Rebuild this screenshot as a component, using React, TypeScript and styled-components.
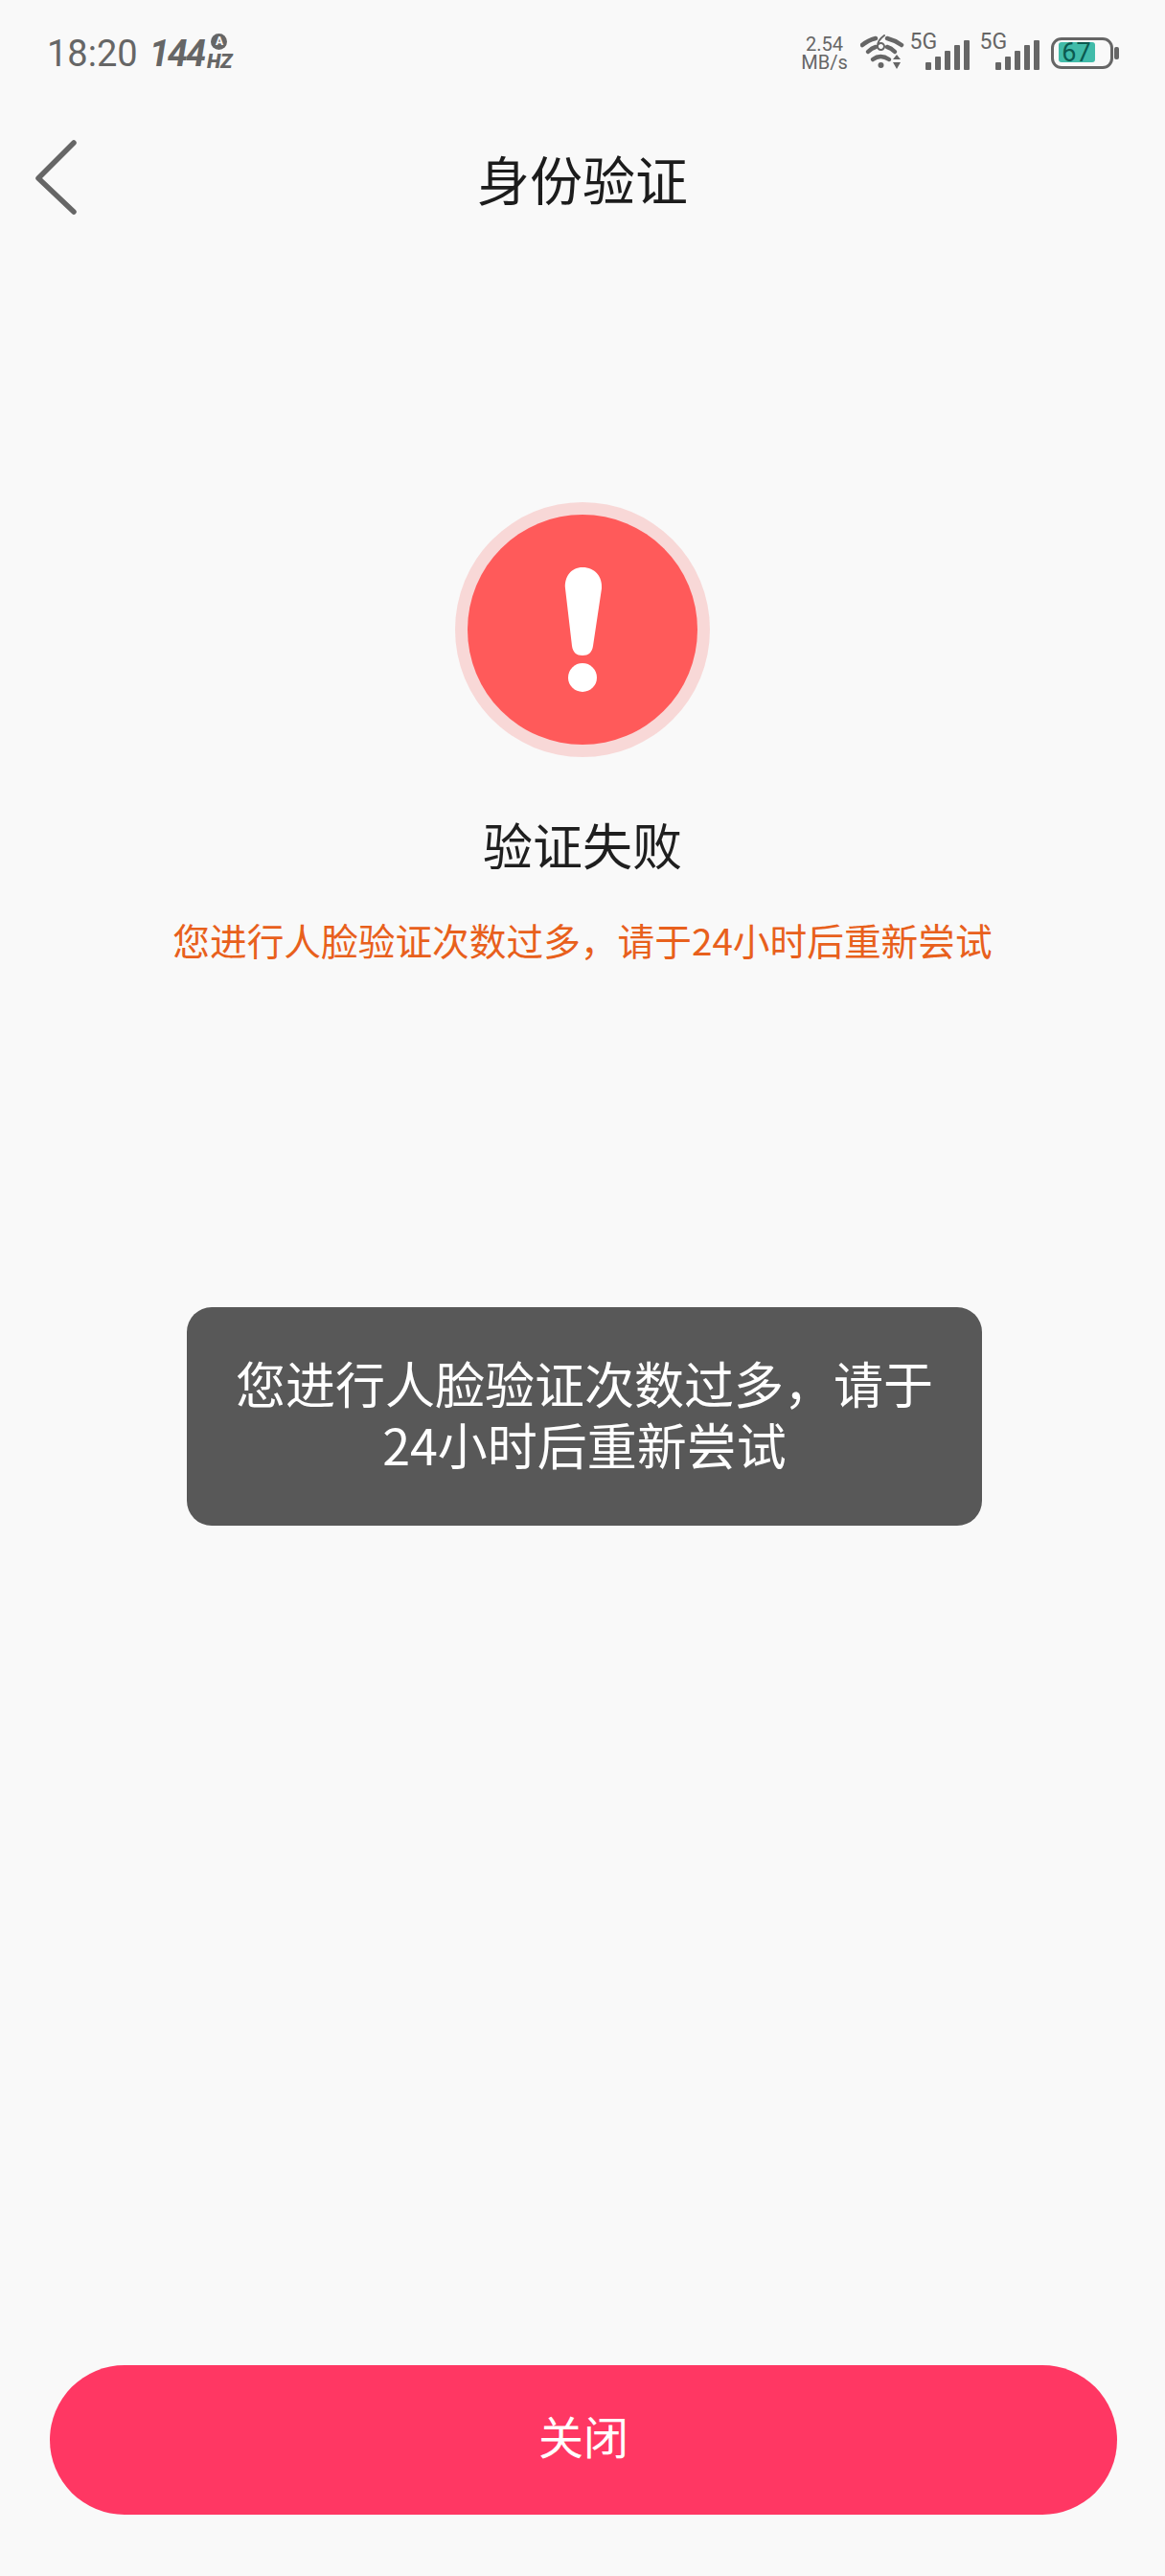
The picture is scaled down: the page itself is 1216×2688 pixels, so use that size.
import React from "react";
import styled, { createGlobalStyle } from "styled-components";

const GlobalStyle = createGlobalStyle`
    html, body {
        margin: 0;
        padding: 0;
        background: #f9f9f9;
    }
    * {
        box-sizing: border-box;
    }
`;

const cjk = `"Noto Sans CJK SC", "Noto Sans", sans-serif`;

const Page = styled.div`
    position: relative;
    display: flex;
    flex-direction: column;
    align-items: stretch;
    width: 1216px;
    height: 2688px;
    background: #f9f9f9;
    font-family: ${cjk};
    overflow: hidden;
`;

const StatusBar = styled.div`
    display: flex;
    justify-content: space-between;
    align-items: flex-start;
    height: 112px;
    padding: 36px 48px 0 49px;
    color: #666;
    font-family: Roboto, sans-serif;
`;

const StatusLeft = styled.div`
    display: flex;
    align-items: flex-start;
    gap: 12px;
`;

const Time = styled.span`
    font-size: 38px;
    line-height: 40px;
`;

const Rate = styled.div`
    display: flex;
    align-items: flex-end;
    height: 40px;
`;

const RateValue = styled.span`
    font-size: 38px;
    font-weight: 700;
    font-style: italic;
    line-height: 40px;
    letter-spacing: -2px;
`;

const RateUnit = styled.div`
    display: flex;
    flex-direction: column;
    align-items: center;
    margin: 0 0 3px 3px;
`;

const AutoBadge = styled.span`
    display: flex;
    align-items: center;
    justify-content: center;
    width: 17px;
    height: 17px;
    margin-top: -6px;
    border-radius: 50%;
    background: #666;
    color: #f9f9f9;
    font-size: 12px;
    font-weight: 700;
    line-height: 17px;
`;

const Hz = styled.span`
    margin-top: 3px;
    font-size: 21px;
    font-weight: 900;
    font-style: italic;
    line-height: 18px;
    letter-spacing: -0.5px;
`;

const StatusRight = styled.div`
    display: flex;
    align-items: flex-start;
    height: 40px;
`;

const Speed = styled.div`
    display: flex;
    flex-direction: column;
    align-items: center;
    width: 48px;
    margin: 1px 13px 0 0;
    font-size: 20px;
    line-height: 19px;
`;

const SpeedLine = styled.span`
    display: block;
    height: 19px;
`;

const Network = styled.div`
    position: relative;
    width: 62px;
    height: 37px;
    margin-left: ${(p: { $gap: number }) => p.$gap}px;
`;

const NetworkLabel = styled.span`
    position: absolute;
    left: 0;
    top: -3px;
    font-size: 23px;
    line-height: 22px;
`;

const Bars = styled.div`
    position: absolute;
    right: 0;
    bottom: 0;
    display: flex;
    align-items: flex-end;
    gap: 4.4px;
`;

const Bar = styled.i`
    display: block;
    width: 5.6px;
    height: ${(p: { $h: number }) => p.$h}px;
    background: #666;
    border-radius: 1px;
`;

const Battery = styled.div`
    display: flex;
    align-items: center;
    margin: 3px 0 0 12px;
`;

const BatteryBody = styled.div`
    display: flex;
    width: 65px;
    height: 33px;
    padding: 3px 16px 3px 5px;
    border: 3.5px solid #666;
    border-radius: 11px;
`;

const BatteryFill = styled.div`
    flex: 1;
    display: flex;
    align-items: center;
    justify-content: center;
    background: #41bba9;
    border-radius: 3px;
    color: #0b5a50;
    font-size: 27px;
    line-height: 20px;
    transform: translateY(-1px);
`;

const BatteryNub = styled.i`
    display: block;
    width: 5px;
    height: 13px;
    margin-left: 1.5px;
    background: #666;
    border-radius: 2px;
`;

const Header = styled.div`
    display: grid;
    grid-template-columns: 100px 1fr 100px;
    align-items: center;
    height: 148px;
`;

const Back = styled.div`
    display: flex;
    padding-left: 36px;
`;

const Title = styled.h1`
    margin: -3px 0 0;
    text-align: center;
    color: #1c1c1c;
    font-size: 55px;
    font-weight: 400;
    line-height: 74px;
`;

const Result = styled.div`
    flex: 1;
    display: flex;
    flex-direction: column;
    align-items: center;
    padding-top: 264px;
`;

const ResultIcon = styled.svg`
    display: block;
    width: 266px;
    height: 266px;
`;

const ResultTitle = styled.h2`
    margin: 56px 0 0;
    color: #1f1f1f;
    font-size: 52px;
    font-weight: 400;
    line-height: 70px;
`;

const ResultText = styled.p`
    margin: 39px 0 0;
    color: #e8601c;
    font-size: 38.7px;
    line-height: 50px;
    white-space: nowrap;
`;

const Toast = styled.div`
    position: absolute;
    left: 195px;
    top: 1364px;
    width: 830px;
    height: 228px;
    padding: 47px 48px 0;
    border-radius: 26px;
    background: #585858;
    color: #fff;
    font-size: 52px;
    line-height: 64px;
    text-align: center;
`;

const Footer = styled.div`
    padding: 0 50px 64px 52px;
`;

const CloseButton = styled.button`
    display: block;
    width: 100%;
    height: 156px;
    padding: 0 0 10px;
    border: none;
    border-radius: 78px;
    background: #ff3763;
    color: #fff;
    font-family: ${cjk};
    font-size: 47px;
    line-height: 146px;
`;

function SignalBars() {
    return (
        <Bars>
            {[8, 14, 20, 26, 31].map((h) => (
                <Bar key={h} $h={h} />
            ))}
        </Bars>
    );
}

export default function App() {
    return (
        <Page>
            <GlobalStyle />
            <StatusBar>
                <StatusLeft>
                    <Time>18:20</Time>
                    <Rate>
                        <RateValue>144</RateValue>
                        <RateUnit>
                            <AutoBadge>A</AutoBadge>
                            <Hz>HZ</Hz>
                        </RateUnit>
                    </Rate>
                </StatusLeft>
                <StatusRight>
                    <Speed>
                        <SpeedLine>2.54</SpeedLine>
                        <SpeedLine>MB/s</SpeedLine>
                    </Speed>
                    <svg width="46" height="38" viewBox="0 0 46 38" fill="none" stroke="#666" strokeLinecap="round">
                        <path d="M2 11 Q8 6 16 4" strokeWidth="4.5" />
                        <path d="M28 4 Q36 6 43 11" strokeWidth="4.5" />
                        <path d="M8 18 Q12 14 16 13" strokeWidth="4.5" />
                        <path d="M28 13 Q32 14 36 18" strokeWidth="4.5" />
                        <path d="M13 26 Q21 20 30 26" strokeWidth="4.5" />
                        <circle cx="21.5" cy="32" r="3" fill="#666" stroke="none" />
                        <path d="M25 1 Q18 6 18 12 A3.5 3.5 0 1 0 19 10" strokeWidth="2" />
                        <path d="M38 21 L42 26 L34 26 Z M34 29 L42 29 L38 36 Z" fill="#666" stroke="none" />
                    </svg>
                    <Network $gap={6}>
                        <NetworkLabel>5G</NetworkLabel>
                        <SignalBars />
                    </Network>
                    <Network $gap={11}>
                        <NetworkLabel>5G</NetworkLabel>
                        <SignalBars />
                    </Network>
                    <Battery>
                        <BatteryBody>
                            <BatteryFill>67</BatteryFill>
                        </BatteryBody>
                        <BatteryNub />
                    </Battery>
                </StatusRight>
            </StatusBar>
            <Header>
                <Back>
                    <svg width="46" height="82" viewBox="0 0 46 82" fill="none">
                        <path d="M41 4 L4 41 L41 76" stroke="#666" strokeWidth="5.5" strokeLinecap="round" strokeLinejoin="round" />
                    </svg>
                </Back>
                <Title>身份验证</Title>
            </Header>
            <Result>
                <ResultIcon viewBox="0 0 266 266">
                    <circle cx="133" cy="133" r="133" fill="#f8d8d7" />
                    <circle cx="133" cy="133" r="120" fill="#ff5a5a" />
                    <path d="M133 68 C146 68 154 78 153 90 L144 150 C143 157 139 160 133 160 C127 160 123 157 122 150 L115 90 C114 78 121 68 133 68 Z" fill="#fff" />
                    <circle cx="133" cy="183" r="15" fill="#fff" />
                </ResultIcon>
                <ResultTitle>验证失败</ResultTitle>
                <ResultText>您进行人脸验证次数过多，请于24小时后重新尝试</ResultText>
            </Result>
            <Toast>您进行人脸验证次数过多，请于24小时后重新尝试</Toast>
            <Footer>
                <CloseButton>关闭</CloseButton>
            </Footer>
        </Page>
    );
}
